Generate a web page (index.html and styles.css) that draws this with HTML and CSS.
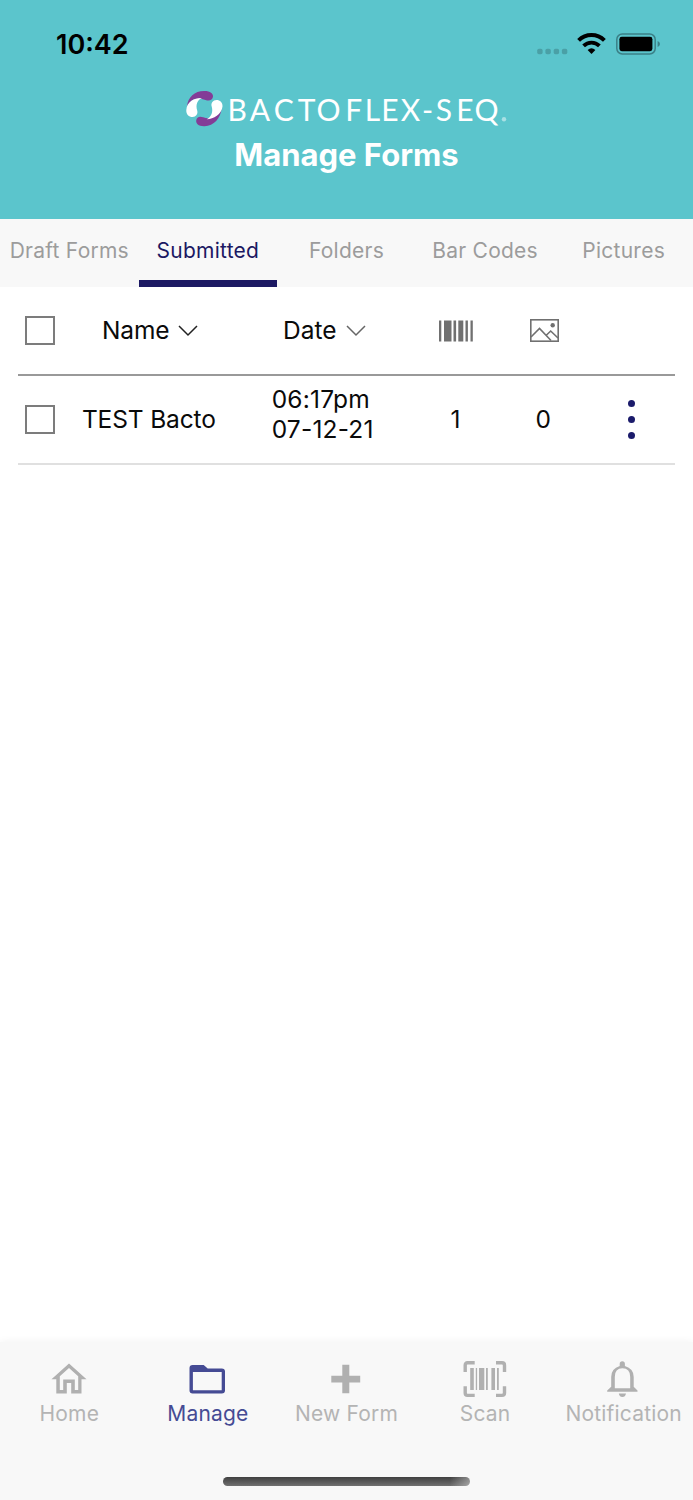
FILE: index.html
```html
<!DOCTYPE html>
<html lang="en">
<head>
    <meta charset="UTF-8">
    <meta name="viewport" content="width=device-width, initial-scale=1.0">
    <title>Manage Forms</title>
    <link rel="stylesheet" href="styles.css">
</head>
<body>
    <div class="app">
        <header class="app-header">
            <div class="status-bar">
                <span class="time">10:42</span>
                <svg class="status-icons" width="126" height="24" viewBox="0 0 126 24">
                    <g fill="#4aa0a6">
                        <rect x="1.2" y="16.8" width="5.4" height="5.4" rx="1.7"/>
                        <rect x="9.4" y="16.8" width="5.4" height="5.4" rx="1.7"/>
                        <rect x="17.7" y="16.8" width="5.4" height="5.4" rx="1.7"/>
                        <rect x="25.9" y="16.8" width="5.4" height="5.4" rx="1.7"/>
                    </g>
                    <path d="M42.6 8.4 A18.4 18.4 0 0 1 68.4 8.4" fill="none" stroke="#000" stroke-width="4"/>
                    <path d="M47.6 13.9 A11.2 11.2 0 0 1 63.4 13.9" fill="none" stroke="#000" stroke-width="3.8"/>
                    <path d="M51.6 18 Q55.5 14.4 59.4 18 L55.5 22 Z"/>
                    <rect x="80.8" y="2" width="38.4" height="20" rx="5.5" fill="none" stroke="#3b8087" stroke-width="1.5"/>
                    <rect x="83.4" y="4.8" width="33" height="14.4" rx="2.4"/>
                    <path d="M121.6 9 Q124 10 124 12 Q124 14 121.6 15 Z" fill="#3b8087"/>
                </svg>
            </div>
            <svg class="logo" width="323" height="40" viewBox="0 0 323 40">
                <path d="M2 18.5 C3 9 9.500 3 19 3 C25 2.800 28.300 5.500 28 8.500 C27.600 12.500 24 13.400 20.500 12 C12 8.400 6 11 2 18.500 Z" fill="#833c97"/>
                <path d="M36.600 20.500 C35.600 30 29 38.200 19.500 38.200 C13.500 38.400 10.800 35.500 11.200 32.500 C11.700 28.500 15 28 18.200 29.300 C26 32.500 32.500 28 36.600 20.500 Z" fill="#833c97"/>
                <path d="M17 10.100 C10.500 9.600 2 13 1.300 22 C1 26.500 4 29 7.500 29 C11 29 13.200 26 12.200 22.500 C10.500 17.500 12 12 17 10.100 Z" fill="#fff"/>
                <path d="M21.700 31.200 C28.200 31.300 36.700 26.500 37.500 18.500 C37.800 14.500 35 12 31.500 12 C28 12 25.700 15 26.700 18.500 C28.200 23.500 26.600 29 21.700 31.200 Z" fill="#fff"/>
                <text class="logo-text" y="33.300" x="42.500 64.800 88.800 112.800 131.500 160.200 179.700 196.200 215.700 237 250.800 271.200 289.500">BACTOFLEX-SEQ</text>
                <circle cx="319" cy="31.300" r="2.200" fill="#a9e0e4"/>
            </svg>
            <h1>Manage Forms</h1>
        </header>

        <nav class="tabs">
            <a class="tab">Draft Forms</a>
            <a class="tab active">Submitted</a>
            <a class="tab">Folders</a>
            <a class="tab">Bar Codes</a>
            <a class="tab">Pictures</a>
        </nav>

        <main class="forms">
            <div class="row row-head">
                <span class="checkbox"></span>
                <div class="name sortable">
                    <span>Name</span>
                    <svg width="20" height="12" viewBox="0 0 20 12"><path d="M1 1 L10 10 L19 1" fill="none" stroke="#222" stroke-width="1.5"/></svg>
                </div>
                <div class="date sortable">
                    <span>Date</span>
                    <svg width="20" height="12" viewBox="0 0 20 12"><path d="M1 1 L10 10 L19 1" fill="none" stroke="#666" stroke-width="1.5"/></svg>
                </div>
                <div class="count">
                    <svg width="34" height="22" viewBox="0 0 34 22" fill="#707070">
                        <rect x="0" y="0.500" width="2.300" height="21"/>
                        <rect x="5" y="0.500" width="7.500" height="21"/>
                        <rect x="14.500" y="0.500" width="2.600" height="21"/>
                        <rect x="19.300" y="0.500" width="5" height="21"/>
                        <rect x="26.500" y="0.500" width="2.400" height="21"/>
                        <rect x="31.500" y="0.500" width="2.300" height="21"/>
                    </svg>
                </div>
                <div class="count">
                    <svg width="29" height="23" viewBox="0 0 29 23" fill="none" stroke="#707070" stroke-width="1.6">
                        <rect x="0.800" y="0.800" width="27.400" height="21.400"/>
                        <path d="M1 18 L9.500 9.500 L21 21.500 M16 16.500 L20.700 12 L28 19"/>
                        <circle cx="22.700" cy="6.200" r="2.200" fill="#707070" stroke="none"/>
                    </svg>
                </div>
            </div>
            <div class="row">
                <span class="checkbox"></span>
                <div class="name"><span>TEST Bacto</span></div>
                <div class="date date-value">06:17pm<br>07-12-21</div>
                <div class="count"><span>1</span></div>
                <div class="count"><span>0</span></div>
                <div class="menu"><i></i><i></i><i></i></div>
            </div>
        </main>

        <footer class="bottom-bar">
            <nav class="bottom-nav">
                <a class="nav-item">
                    <svg width="44" height="38" viewBox="0 0 44 38">
                        <path fill-rule="evenodd" fill="#b0b0b0" d="M22 3.500 L39.500 19.200 H34.500 V33.500 H24.200 V23 H19.800 V33.500 H9.300 V19.200 H4.500 Z M22 8 L12.800 16.200 V30 H16.200 V19.500 H27.800 V30 H31.200 V16.200 Z"/>
                    </svg>
                    <span>Home</span>
                </a>
                <a class="nav-item active">
                    <svg width="44" height="38" viewBox="0 0 44 38">
                        <path fill-rule="evenodd" fill="#454b94" d="M6.700 5 H17.700 L21.700 8.500 H35.700 Q39 8.500 39 11.500 V30.500 Q39 33.500 35.700 33.500 H6.700 Q3.500 33.500 3.500 30.500 V8 Q3.500 5 6.700 5 Z M6.900 12 V30.200 H35.700 V12 Z"/>
                    </svg>
                    <span>Manage</span>
                </a>
                <a class="nav-item">
                    <svg width="44" height="38" viewBox="0 0 44 38">
                        <path fill="#b0b0b0" d="M18.300 4.800 H25.300 V15.700 H36.200 V22.500 H25.300 V33.300 H18.300 V22.500 H7.300 V15.700 H18.300 Z"/>
                    </svg>
                    <span>New Form</span>
                </a>
                <a class="nav-item">
                    <svg width="44" height="38" viewBox="0 0 44 38">
                        <path fill="none" stroke="#b0b0b0" stroke-width="3.400" d="M11.700 2.800 H4.500 Q2.200 2.800 2.200 5.200 V12 M33 2.800 H39 Q41.500 2.800 41.500 5.200 V12 M2.200 26.300 V33 Q2.200 35.400 4.500 35.400 H11.700 M41.500 26.300 V33 Q41.500 35.400 39 35.400 H33"/>
                        <g fill="#b0b0b0">
                            <rect x="7.200" y="8" width="3.600" height="22"/>
                            <rect x="12.800" y="8" width="1.300" height="22"/>
                            <rect x="16" y="8" width="5.300" height="22"/>
                            <rect x="23" y="8" width="1.800" height="22"/>
                            <rect x="28.400" y="8" width="3.600" height="22"/>
                            <rect x="34" y="8" width="1.800" height="22"/>
                        </g>
                    </svg>
                    <span>Scan</span>
                </a>
                <a class="nav-item">
                    <svg width="44" height="38" viewBox="0 0 44 38">
                        <path fill="#b0b0b0" fill-rule="evenodd" d="M5.200 31.700 V30.500 L9.200 26.700 V17 Q9.200 8.500 17.700 6 V4 Q17.700 1.300 20.300 1.300 Q22.900 1.300 22.900 4 V6 Q31.700 8.500 31.700 17 V26.700 L35.500 30.500 V31.700 Z M12.800 28.200 H28.200 V17 Q28.200 8.300 20.400 8.300 Q12.800 8.300 12.800 17 Z M16.800 33.500 H24 Q23.300 37 20.400 37 Q17.500 37 16.800 33.500 Z"/>
                    </svg>
                    <span>Notification</span>
                </a>
            </nav>
            <div class="home-indicator"></div>
        </footer>
    </div>
</body>
</html>
```

FILE: styles.css
```css
* {
    margin: 0;
    padding: 0;
    box-sizing: border-box;
}

body {
    font-family: Inter, 'Liberation Sans', sans-serif;
    background: white;
    color: #0a0a0a;
}

svg {
    display: block;
    flex-shrink: 0;
}

.app {
    height: 1500px;
    display: flex;
    flex-direction: column;
}

.app-header {
    height: 219px;
    background: #5bc5cc;
    display: flex;
    flex-direction: column;
    align-items: center;
}

.status-bar {
    width: 100%;
    height: 88px;
    padding: 0 31px 0 56px;
    display: flex;
    justify-content: space-between;
    align-items: center;
}

.time {
    font-size: 27px;
    font-weight: 600;
    color: black;
}

.logo-text {
    font-family: Lato, sans-serif;
    font-size: 30px;
    fill: white;
}

.app-header h1 {
    color: white;
    font-size: 31px;
    font-weight: 700;
    line-height: 40px;
    margin-top: 7px;
}

.tabs {
    height: 68px;
    background: #f8f8f8;
    display: flex;
}

.tab {
    flex: 1 0 0;
    width: 0;
    display: flex;
    justify-content: center;
    white-space: nowrap;
    padding-top: 18px;
    font-size: 21px;
    line-height: 28px;
    letter-spacing: 0.25px;
    color: #9c9c9c;
}

.tab.active {
    color: #1c1963;
    border-bottom: 7px solid #1c1963;
}

.forms {
    flex: 1;
    padding: 0 18px;
}

.row {
    height: 89px;
    border-bottom: 2px solid #e0e0e0;
    display: flex;
    align-items: center;
    padding-left: 7px;
    font-size: 24.5px;
    line-height: 30px;
}

.row span {
    margin-bottom: 2px;
}

.row-head {
    border-bottom-color: #999;
}

.row .checkbox {
    width: 30px;
    height: 29px;
    margin-bottom: 0;
    border: 2px solid #7c7c7c;
}

.name {
    width: 189px;
    padding-left: 27px;
    display: flex;
    letter-spacing: -0.15px;
}

.date {
    width: 168px;
    padding-left: 29px;
}

.date-value {
    padding-left: 28px;
    padding-bottom: 12px;
    letter-spacing: 0.2px;
}

.sortable {
    display: flex;
    align-items: center;
    gap: 9px;
}

.name.sortable {
    padding-left: 47px;
}

.date.sortable {
    padding-left: 39px;
}

.count {
    width: 88px;
    display: flex;
    justify-content: center;
}

.menu {
    width: 88px;
    display: flex;
    flex-direction: column;
    align-items: center;
    gap: 9px;
}

.menu i {
    width: 7px;
    height: 7px;
    border-radius: 50%;
    background: #1b1b6b;
}

.bottom-bar {
    height: 158px;
    background: #f8f8f8;
    box-shadow: 0 0 8px rgba(0,0,0,0.06);
    display: flex;
    flex-direction: column;
    align-items: center;
    justify-content: space-between;
    padding-bottom: 14px;
}

.bottom-nav {
    width: 100%;
    display: flex;
    padding-top: 18px;
}

.nav-item {
    flex: 1 0 0;
    width: 0;
    display: flex;
    flex-direction: column;
    align-items: center;
    white-space: nowrap;
    font-size: 21px;
    line-height: 28px;
    letter-spacing: 0.2px;
    color: #b4b4b4;
}

.nav-item span {
    margin-top: 2px;
}

.nav-item.active {
    color: #454b94;
}

.home-indicator {
    width: 247px;
    height: 9px;
    border-radius: 5px;
    background: linear-gradient(90deg, rgba(248,248,248,0) 92%, rgba(248,248,248,0.4)), linear-gradient(#404040, #707070);
}
```
